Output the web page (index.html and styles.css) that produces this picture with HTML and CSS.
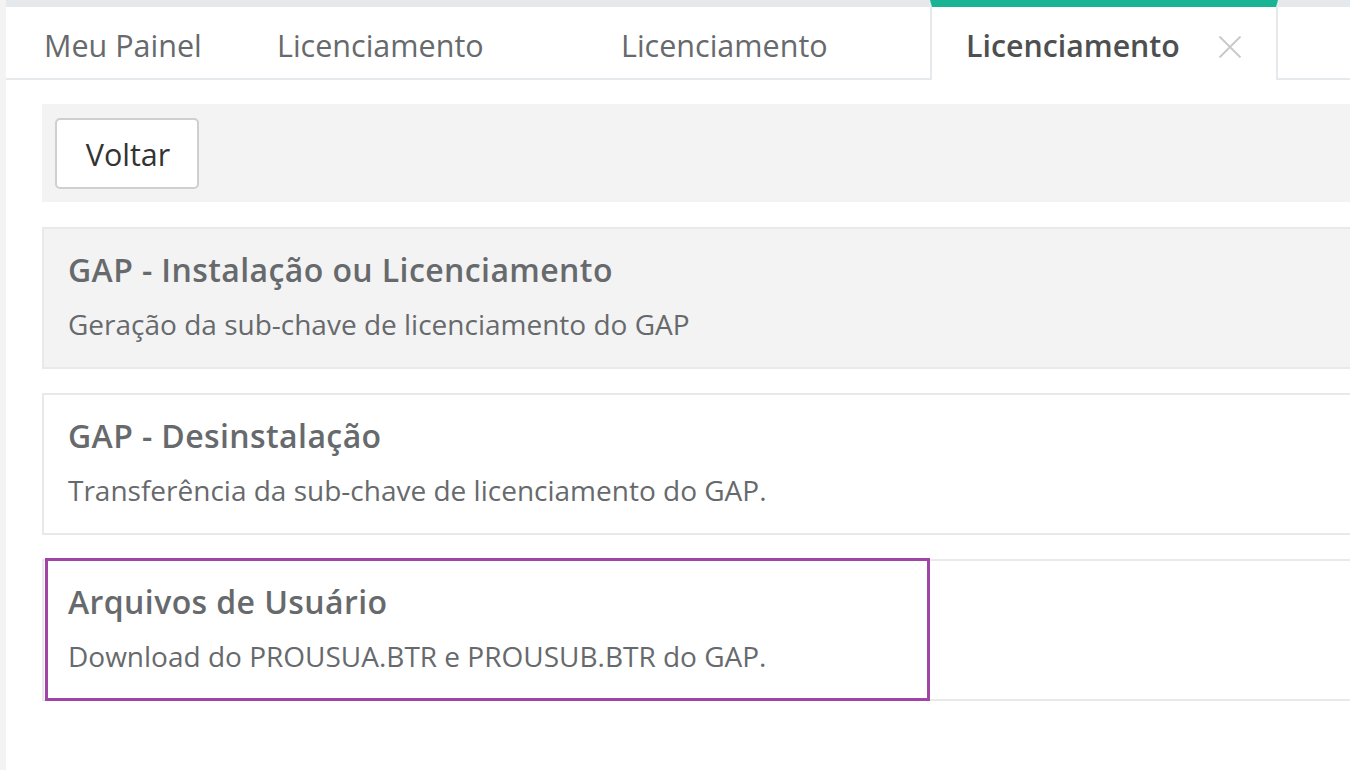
FILE: index.html
```html
<!DOCTYPE html>
<html lang="pt">
<head>
<meta charset="utf-8">
<link rel="stylesheet" href="styles.css">
</head>
<body>
<div class="layout">
  <div class="side"></div>
  <div class="main">
    <div class="tabbar">
      <div class="tab tab-home">Meu Painel</div>
      <div class="tab tab-wide">Licenciamento</div>
      <div class="tab tab-wide">Licenciamento</div>
      <div class="tab tab-active">
        <span>Licenciamento</span>
        <svg class="close" width="24" height="22" viewBox="0 0 24 22"><path d="M1.5 0.5L22.5 21.5M22.5 0.5L1.5 21.5" stroke="#cacaca" stroke-width="2" fill="none"/></svg>
      </div>
      <div class="tab tab-fill"></div>
    </div>
    <div class="content">
      <div class="toolbar">
        <button class="btn">Voltar</button>
      </div>
      <div class="card card-hover">
        <div class="card-title">GAP - Instalação ou Licenciamento</div>
        <div class="card-desc">Geração da sub-chave de licenciamento do GAP</div>
      </div>
      <div class="card">
        <div class="card-title">GAP - Desinstalação</div>
        <div class="card-desc">Transferência da sub-chave de licenciamento do GAP.</div>
      </div>
      <div class="card card-focus">
        <div class="card-title">Arquivos de Usuário</div>
        <div class="card-desc">Download do PROUSUA.BTR e PROUSUB.BTR do GAP.</div>
        <div class="focus-ring"></div>
      </div>
    </div>
  </div>
</div>
</body>
</html>
```

FILE: styles.css
```css
* { box-sizing: border-box; }
html, body { margin: 0; padding: 0; height: 100%; }
body {
  font-family: "Open Sans", "Noto Sans", sans-serif;
  color: #676a6c;
  background: #fff;
  overflow: hidden;
}
.layout { display: flex; height: 770px; }
.side { width: 6px; background: #f3f3f4; flex: none; }
.main { flex: 1; overflow: hidden; background: #fff; }

.tabbar {
  display: flex;
  align-items: flex-end;
  height: 80px;
  background: #e6e9ec;
}
.tab {
  height: 73px;
  background: #fff;
  border-bottom: 2px solid #e7eaec;
  font-size: 30.5px;
  color: #676a6c;
  display: flex;
  align-items: center;
  padding-top: 5px;
  flex: none;
}
.tab-home { width: 236px; padding-left: 38px; }
.tab-wide { width: 344px; padding-left: 35px; }
.tab-active {
  width: 348px;
  height: 80px;
  border-top: 7px solid #1ab394;
  border-left: 2px solid #e7eaec;
  border-right: 2px solid #e7eaec;
  border-bottom: none;
  padding-left: 34px;
  padding-top: 4px;
  padding-bottom: 1px;
  font-weight: 600;
  font-size: 30.3px;
  color: #4d4f51;
}
.tab-active .close { margin-left: 38px; margin-top: 4px; }
.tab-fill { flex: 1; }

.content { padding: 24px 0 0 36px; }
.toolbar {
  height: 98px;
  background: #f3f3f4;
  padding: 14px 13px;
}
.btn {
  width: 144px;
  height: 71px;
  background: #fff;
  border: 2px solid #cfcfcf;
  border-radius: 5px;
  font-family: "Open Sans", "Noto Sans", sans-serif;
  font-size: 30.5px;
  color: #333;
  padding: 0 0 0 2px;
}

.card {
  position: relative;
  margin-top: 25px;
  margin-right: -20px;
  height: 142px;
  border: 2px solid #e9e9e9;
  background: #fff;
  padding: 21px 24px 0 24px;
}
.card + .card { margin-top: 24px; }
.card-hover { background: #f3f3f4; }
.card-title {
  font-size: 32px;
  font-weight: 600;
  letter-spacing: 0.4px;
  line-height: 40px;
}
.card-desc {
  font-size: 28px;
  line-height: 36px;
  margin-top: 16px;
}
.focus-ring {
  position: absolute;
  left: 1px;
  top: -3px;
  width: 885px;
  height: 143px;
  border: 3px solid #a044a6;
}
```
